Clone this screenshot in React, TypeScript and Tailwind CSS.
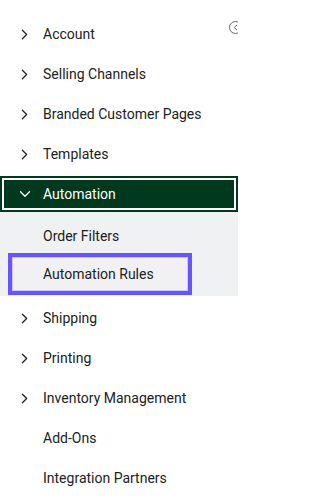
import { ChevronDown, ChevronLeft, ChevronRight } from "lucide-react";

interface NavItem {
  hasChildren: boolean;
  label: string;
}

const topItems: NavItem[] = [
  { hasChildren: true, label: "Account" },
  { hasChildren: true, label: "Selling Channels" },
  { hasChildren: true, label: "Branded Customer Pages" },
  { hasChildren: true, label: "Templates" },
];

const bottomItems: NavItem[] = [
  { hasChildren: true, label: "Shipping" },
  { hasChildren: true, label: "Printing" },
  { hasChildren: true, label: "Inventory Management" },
  { hasChildren: false, label: "Add-Ons" },
  { hasChildren: false, label: "Integration Partners" },
];

function NavRow({ item }: Readonly<{ item: NavItem }>) {
  return (
    <li className="flex h-10 items-center">
      <span className="flex w-[43px] shrink-0 justify-end pr-[10px]">
        {item.hasChildren ? <ChevronRight className="size-[17px] text-[#222]" strokeWidth={1.8} /> : null}
      </span>
      <span className="text-[14px] text-[#212121]">{item.label}</span>
    </li>
  );
}

export default function App() {
  return (
    <div className="relative h-[500px] w-[238px] overflow-hidden bg-white font-['Roboto',_'Liberation_Sans',_sans-serif]">
      <button
        className="absolute left-[229px] top-[21px] flex size-[13px] items-center justify-center rounded-full border border-[#666] bg-white"
        type="button"
      >
        <ChevronLeft className="size-[9px] text-[#555]" strokeWidth={2.5} />
      </button>
      <ul className="pt-[14px]">
        {topItems.map((item) => (
          <NavRow item={item} key={item.label} />
        ))}
        <li className="py-[2px]">
          <div className="flex h-9 items-center bg-[#00391e] outline-2 -outline-offset-4 outline-white">
            <span className="flex w-[43px] shrink-0 justify-end pr-[9px]">
              <ChevronDown className="size-[18px] text-white" strokeWidth={1.8} />
            </span>
            <span className="text-[14px] text-white">Automation</span>
          </div>
          <ul className="bg-[#f0f1f3] pb-[1px] pt-[12px]">
            <li className="flex h-6 items-center pl-[43px] text-[14px] text-[#212121]">Order Filters</li>
            <li className="ml-2 mt-[5px] flex h-[42px] w-[184px] items-center border-4 border-[#6655ff] bg-[#f1f1f4] pl-[31px] text-[14px] text-[#212121] shadow-[inset_0_0_0_1px_#cdc8f7]">
              Automation Rules
            </li>
          </ul>
        </li>
        {bottomItems.map((item) => (
          <NavRow item={item} key={item.label} />
        ))}
      </ul>
    </div>
  );
}
